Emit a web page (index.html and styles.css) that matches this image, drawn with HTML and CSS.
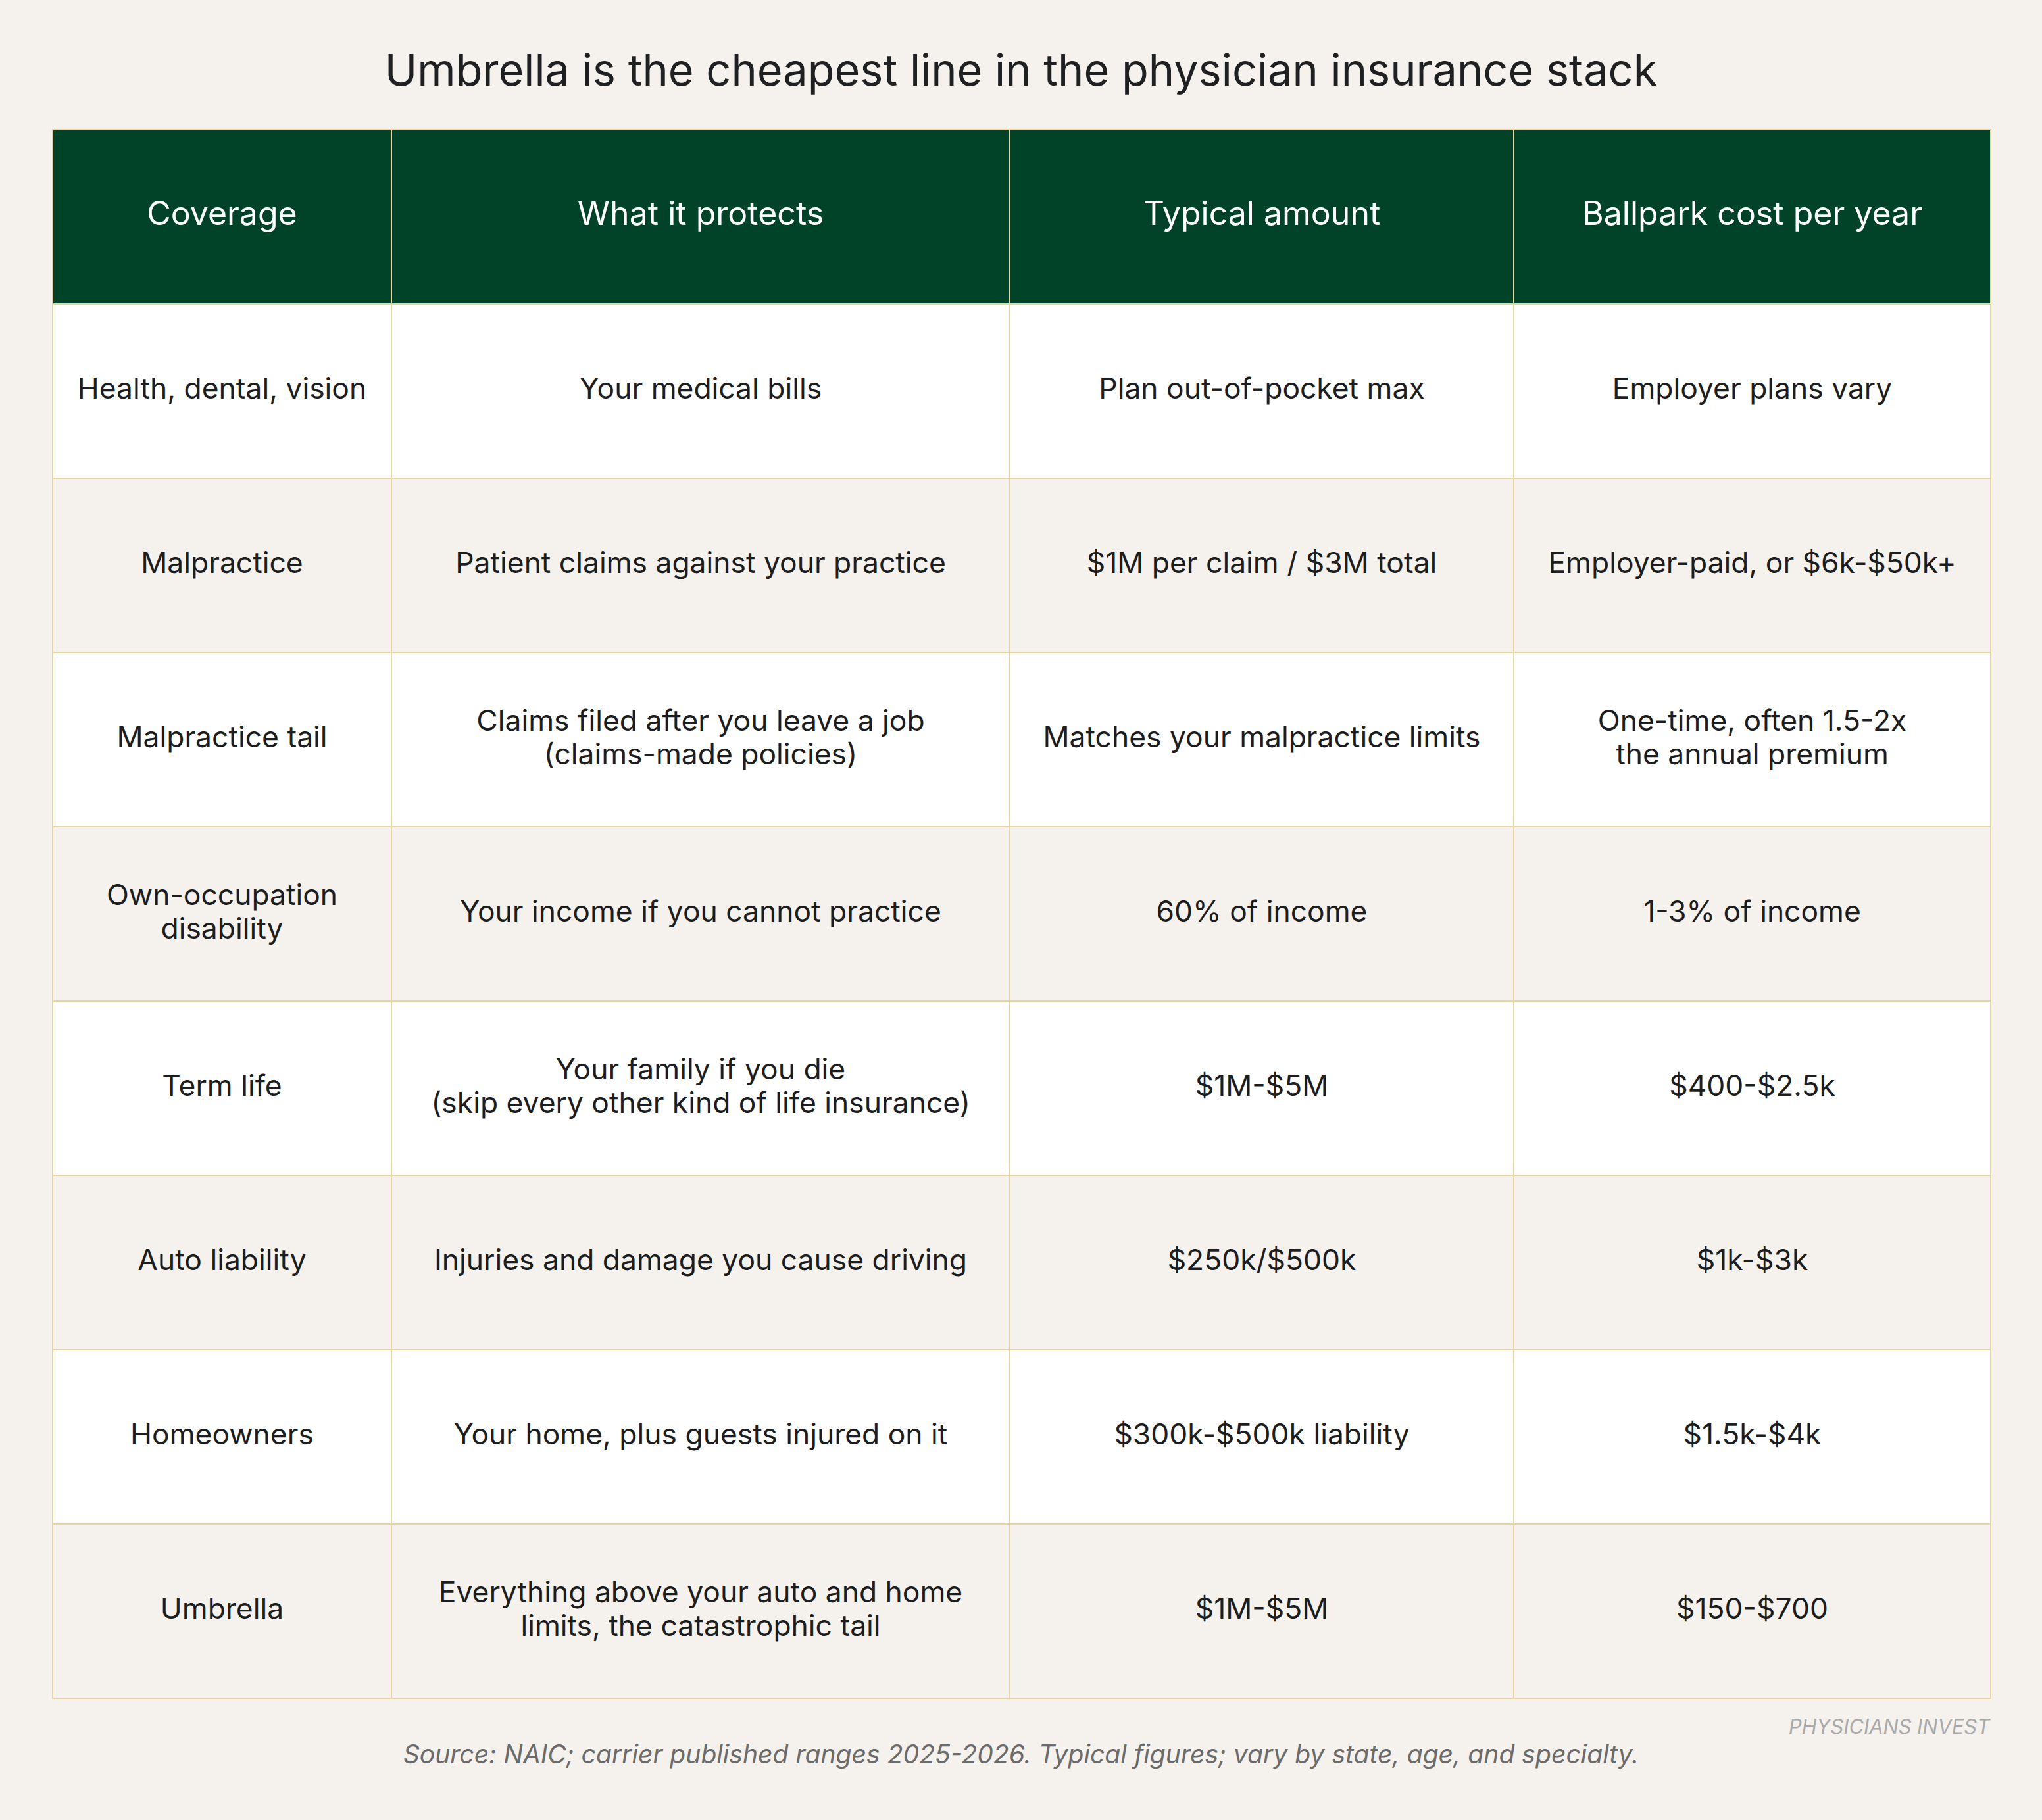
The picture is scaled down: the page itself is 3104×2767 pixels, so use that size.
FILE: index.html
```html
<!DOCTYPE html>
<html lang="en">
<head>
<meta charset="utf-8">
<title>Physician insurance stack</title>
<link rel="stylesheet" href="styles.css">
</head>
<body>
<main class="page">
  <h1 class="title">Umbrella is the cheapest line in the physician insurance stack</h1>
  <table class="stack">
    <colgroup>
      <col class="c1"><col class="c2"><col class="c3"><col class="c4">
    </colgroup>
    <thead>
      <tr><th>Coverage</th><th>What it protects</th><th>Typical amount</th><th>Ballpark cost per year</th></tr>
    </thead>
    <tbody>
      <tr><td>Health, dental, vision</td><td>Your medical bills</td><td>Plan out-of-pocket max</td><td>Employer plans vary</td></tr>
      <tr><td>Malpractice</td><td>Patient claims against your practice</td><td>$1M per claim / $3M total</td><td>Employer-paid, or $6k-$50k+</td></tr>
      <tr><td>Malpractice tail</td><td>Claims filed after you leave a job<br>(claims-made policies)</td><td>Matches your malpractice limits</td><td>One-time, often 1.5-2x<br>the annual premium</td></tr>
      <tr><td>Own-occupation<br>disability</td><td>Your income if you cannot practice</td><td>60% of income</td><td>1-3% of income</td></tr>
      <tr><td>Term life</td><td>Your family if you die<br>(skip every other kind of life insurance)</td><td>$1M-$5M</td><td>$400-$2.5k</td></tr>
      <tr><td>Auto liability</td><td>Injuries and damage you cause driving</td><td>$250k/$500k</td><td>$1k-$3k</td></tr>
      <tr><td>Homeowners</td><td>Your home, plus guests injured on it</td><td>$300k-$500k liability</td><td>$1.5k-$4k</td></tr>
      <tr><td>Umbrella</td><td>Everything above your auto and home<br>limits, the catastrophic tail</td><td>$1M-$5M</td><td>$150-$700</td></tr>
    </tbody>
  </table>
  <p class="brand">PHYSICIANS INVEST</p>
  <p class="source">Source: NAIC; carrier published ranges 2025-2026. Typical figures; vary by state, age, and specialty.</p>
</main>
</body>
</html>
```

FILE: styles.css
```css
html, body {
  margin: 0;
  padding: 0;
  background: #f5f2ed;
}
body {
  font-family: Inter, "Noto Sans", "Liberation Sans", sans-serif;
  color: #1c1d1f;
}
.page {
  padding: 66px 79px 40px;
  display: flex;
  flex-direction: column;
}
.title {
  margin: 0 0 50px;
  font-size: 66.6px;
  font-weight: 400;
  line-height: 80px;
  text-align: center;
  color: #1f2022;
}
.stack {
  width: 2946px;
  border-collapse: collapse;
  table-layout: fixed;
  border: 2px solid #e6d4a2;
}
.c1 { width: 515px; }
.c2 { width: 940px; }
.c3 { width: 766px; }
.c4 { width: 725px; }
.stack th, .stack td {
  border: 2px solid #e6d4a2;
  text-align: center;
  vertical-align: middle;
  padding: 0 20px 8px;
  height: 255px;
}
.stack th {
  background: #004328;
  color: #ffffff;
  font-weight: 400;
  font-size: 50px;
  line-height: 1.2;
  padding-bottom: 12px;
  height: 251px;
}
.stack td {
  font-size: 44.4px;
  line-height: 50.6px;
  color: #1c1d1f;
}
.stack tbody tr:nth-child(odd) td { background: #ffffff; }
.stack tbody tr:nth-child(even) td { background: #f5f2ed; }
.brand {
  margin: 24px 0 0;
  text-align: right;
  font-size: 30.8px;
  font-style: italic;
  line-height: 36px;
  color: #aaaaaa;
}
.source {
  margin: 0;
  text-align: center;
  font-size: 39.1px;
  font-style: italic;
  line-height: 48px;
  color: #6b6b6b;
}
```
